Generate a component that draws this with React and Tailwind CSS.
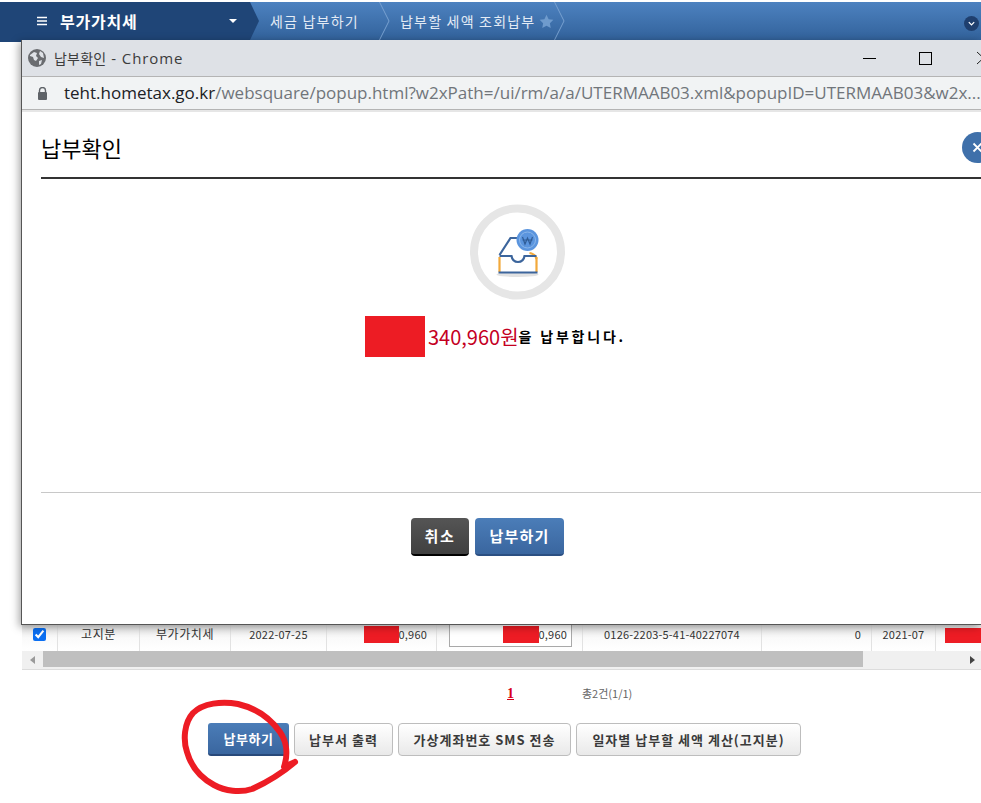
import React from 'react';

const KR = 'font-["Noto_Sans_CJK_KR","Noto_Sans",sans-serif]';

function Chevron() {
  return (
    <svg width="11" height="38" viewBox="0 0 11 38" className="shrink-0">
      <path d="M0.5 0 L10 19 L0.5 38" fill="none" stroke="#78a1d0" strokeWidth="1" />
    </svg>
  );
}

function TopNav() {
  return (
    <div className="mt-[2px] h-[38px] flex whitespace-nowrap bg-gradient-to-b from-[#4d82c0] to-[#32629b] text-[#e3ebf5] text-[14px] tracking-[1.2px]">
      <div className="w-[22px] h-[40px] bg-[#1f4577]" />
      <div className="w-[237px] h-full bg-[#1f4577] [clip-path:polygon(0_0,228px_0,237px_19px,228px_38px,0_38px)] flex items-center">
        <svg width="10" height="10" viewBox="0 0 10 10" className="ml-[15px]">
          <path d="M0 1.5H10M0 5H10M0 8.5H10" stroke="#fff" strokeWidth="1.6" />
        </svg>
        <span className="ml-[13px] font-bold text-[16px] text-white tracking-[0.8px]">부가가치세</span>
        <span className="ml-[91px] w-0 h-0 border-x-[4px] border-x-transparent border-t-[4px] border-t-white" />
      </div>
      <div className="w-[131px] flex items-center justify-between pl-[11px]">
        <span>세금 납부하기</span>
        <Chevron />
      </div>
      <div className="w-[175px] flex items-center pl-[10px]">
        <span>납부할 세액 조회납부</span>
        <svg width="15" height="15" viewBox="0 0 24 24" className="ml-[4px] shrink-0">
          <path d="M12 1l3.4 7.2 7.6 1-5.6 5.4 1.4 7.8L12 18.6l-6.8 3.8 1.4-7.8L1 9.2l7.6-1z" fill="#6f9bcd" />
        </svg>
        <span className="ml-auto"><Chevron /></span>
      </div>
      <div className="ml-auto mr-[2px] mt-[14px] w-[15px] h-[15px] rounded-full bg-[#1f3f6e] flex items-center justify-center">
        <svg width="9" height="9" viewBox="0 0 10 10">
          <path d="M2 3.5L5 6.5L8 3.5" fill="none" stroke="#fff" strokeWidth="1.4" />
        </svg>
      </div>
    </div>
  );
}

function Redacted({ w }) {
  return <span className="h-[17px] bg-[#ed1c24] shrink-0" style={{ width: w }} />;
}

function TableRow() {
  const cell = 'h-full flex items-center border-r border-[#e2e2e2] shrink-0 pb-[8px]';
  const hangul = 'text-[12px] tracking-[0.6px]';
  return (
    <div className="mt-[585px] ml-[22px] h-[26px] flex text-[11px] tracking-[0.2px] text-[#333] bg-gradient-to-b from-[#e4e4e4] via-[#fafafa] to-white">
      <div className={`${cell} w-[36px] justify-center pr-[1px]`}>
        <input type="checkbox" checked readOnly className="w-[13px] h-[13px] accent-[#0b6ff2]" />
      </div>
      <div className={`${cell} w-[82px] justify-center ${hangul}`}>고지분</div>
      <div className={`${cell} w-[91px] justify-center ${hangul}`}>부가가치세</div>
      <div className={`${cell} w-[96px] justify-center`}>2022-07-25</div>
      <div className={`${cell} w-[110px] justify-end pr-[9px]`}>
        <Redacted w={35} />
        <span>0,960</span>
      </div>
      <div className="h-full flex items-start border-r border-[#e2e2e2] shrink-0 w-[146px] pl-[12px]">
        <div className="w-[123px] h-[22px] pb-[3px] bg-white border border-t-0 border-[#a9a9a9] flex items-center justify-end pr-[4px]">
          <Redacted w={36} />
          <span>0,960</span>
        </div>
      </div>
      <div className={`${cell} w-[179px] justify-center`}>0126-2203-5-41-40227074</div>
      <div className={`${cell} w-[110px] justify-end pr-[10px]`}>0</div>
      <div className={`${cell} w-[64px] justify-center`}>2021-07</div>
      <div className="h-full flex items-center pl-[9px] pb-[6px] flex-1">
        <span className="h-[15px] w-full bg-[#ed1c24]" />
      </div>
    </div>
  );
}

function Scrollbar() {
  return (
    <div className="ml-[22px] h-[19px] bg-[#f0f0f0] border-b border-[#dcdcdc] flex items-start">
      <div className="w-[21px] h-[17px] flex items-center justify-center">
        <span className="w-0 h-0 border-y-[4.5px] border-y-transparent border-r-[5px] border-r-[#9a9a9a]" />
      </div>
      <div className="w-[820px] h-[16px] bg-[#bfbfbf]" />
      <div className="flex-1 h-[17px] flex items-center justify-end pr-[6px]">
        <span className="w-0 h-0 border-y-[4.5px] border-y-transparent border-l-[5px] border-l-[#444]" />
      </div>
    </div>
  );
}

function Pager() {
  return (
    <div className="mt-[16px] h-[14px] flex items-center">
      <span className='ml-[507px] font-["Liberation_Serif",serif] font-bold text-[14px] text-[#d8001a] underline'>1</span>
      <span className="ml-[68px] text-[11px] text-[#666]">총2건(1/1)</span>
    </div>
  );
}

function GrayBtn({ w, children }) {
  return (
    <button className="h-[33px] rounded-[4px] border border-[#bdbdbd] bg-gradient-to-b from-white to-[#e9e9e9] text-[13px] font-bold text-[#3a3a3a] tracking-[1px]" style={{ width: w }}>
      {children}
    </button>
  );
}

function BottomButtons() {
  return (
    <div className="mt-[23px] ml-[208px] flex gap-[5px]">
      <button className="w-[81px] h-[33px] rounded-[3px] bg-gradient-to-b from-[#4b7db8] to-[#3a669f] border-b-2 border-[#28497a] text-[13px] font-bold text-white tracking-[0.6px]">납부하기</button>
      <GrayBtn w={99}>납부서 출력</GrayBtn>
      <GrayBtn w={173}>가상계좌번호 SMS 전송</GrayBtn>
      <GrayBtn w={225}>일자별 납부할 세액 계산(고지분)</GrayBtn>
    </div>
  );
}

function ChromeBars() {
  return (
    <>
      <div className="h-[37px] bg-[#dee1e6] border-b border-[#b4b4b4] flex items-center">
        <svg width="18" height="18" viewBox="0 0 18 18" className="ml-[6px]">
          <circle cx="9" cy="9" r="9" fill="#6a6c70" />
          <path d="M2 6l4-3 3 1-1 3 2 2-2 3-2-1-1-3-3-1zM12 2l3 2 1 5-3-1-2-3zM11 12l3-1-1 4-2 1z" fill="#dee1e6" />
        </svg>
        <span className="ml-[8px] text-[14px] text-[#3c3c3c] tracking-[0.2px]">납부확인</span>
        <span className='ml-[5px] text-[15px] text-[#3c3c3c] tracking-[0.9px] font-["Open_Sans",sans-serif]'>- Chrome</span>
        <span className="ml-auto mr-[45px] flex items-center">
          <span className="w-[13px] h-px bg-black" />
          <span className="ml-[43px] w-[13px] h-[13px] border border-black" />
        </span>
        <svg width="4" height="14" viewBox="0 0 4 14" className="shrink-0">
          <path d="M0 1L13 13M13 1L0 13" stroke="#222" strokeWidth="1" fill="none" />
        </svg>
      </div>
      <div className="h-[33px] bg-[#f1f3f4] border-b border-[#b4b4b4] flex items-center whitespace-nowrap overflow-hidden">
        <svg width="11" height="13" viewBox="0 0 11 13" className="ml-[15px] shrink-0">
          <path d="M2.5 5V3.5a3 3 0 0 1 6 0V5" fill="none" stroke="#5f6368" strokeWidth="1.4" />
          <rect x="1" y="5" width="9" height="8" rx="1" fill="#5f6368" />
        </svg>
        <span className='ml-[16px] text-[17px] font-["Open_Sans",sans-serif] text-[#70757a]'>
          <span className="text-[#202124]">teht.hometax.go.kr</span>/websquare/popup.html?w2xPath=/ui/rm/a/a/UTERMAAB03.xml&amp;popupID=UTERMAAB03&amp;w2x...
        </span>
      </div>
      <div className="h-[2px] bg-[#e6e6e6]" />
    </>
  );
}

function InboxIcon() {
  return (
    <svg width="95" height="96" viewBox="0.500 0 95 96" className="block">
      <circle cx="48" cy="48" r="43.500" fill="none" stroke="#e6e6e6" strokeWidth="8" />
      <ellipse cx="48" cy="70.500" rx="21" ry="2.500" fill="#e2e2e2" />
      <path d="M30 53V68M67 53V68" stroke="#f2a93b" strokeWidth="2.200" fill="none" />
      <path d="M60 49Q66 50 67 55" stroke="#f2a93b" strokeWidth="2.200" fill="none" />
      <path d="M30 51L41 34H50" stroke="#3c659c" strokeWidth="2.200" fill="none" />
      <path d="M29 68.500H68M30 52H42Q43 58 48.500 58Q54 58 55 52H67" stroke="#3c659c" strokeWidth="2.200" fill="none" />
      <circle cx="58" cy="36" r="11" fill="#5b95de" />
      <circle cx="58" cy="36" r="8" fill="none" stroke="#8ab6ea" strokeWidth="1" />
      <path d="M53 33L55.500 40L58 34L60.500 40L63 33M53 36H63" stroke="#2f5c96" strokeWidth="1.200" fill="none" />
    </svg>
  );
}

function Popup() {
  return (
    <div className={`absolute left-[21px] top-[40px] w-[960px] h-[585px] bg-white border-l border-b border-[#555] shadow-[-2px_2px_8px_rgba(0,0,0,0.35)] ${KR}`}>
      <ChromeBars />
      <div className="pl-[19px]">
        <div className="h-[67px] pt-[5px] border-b-2 border-[#333] flex items-center overflow-hidden">
          <span className="text-[22px] text-black whitespace-nowrap">납부확인</span>
          <span className="ml-[840px] w-[31px] h-[31px] rounded-full bg-[#3f70aa] flex items-center justify-center shrink-0">
            <svg width="11" height="11" viewBox="0 0 11 11">
              <path d="M1.500 1.500L9.500 9.500M9.500 1.500L1.500 9.500" stroke="#fff" strokeWidth="1.800" />
            </svg>
          </span>
        </div>
        <div className="ml-[429px] mt-[25px] w-[95px]"><InboxIcon /></div>
        <div className="mt-[16px] ml-[324px] h-[41px] flex items-center">
          <span className="w-[60px] h-[41px] bg-[#ed1c24]" />
          <span className="ml-[3px] text-[20px] text-[#c4001f]">340,960원</span>
          <span className="text-[14px] font-bold text-black tracking-[2.8px]">을 납부합니다.</span>
        </div>
        <div className="mt-[135px] h-px bg-[#c8c8c8]" />
        <div className="mt-[25px] ml-[370px] flex gap-[6px]">
          <button className="w-[58px] h-[38px] rounded-[4px] bg-gradient-to-b from-[#555] to-[#404040] border-b-2 border-black text-[15px] font-bold text-white tracking-[1.6px]">취소</button>
          <button className="w-[89px] h-[38px] rounded-[4px] bg-gradient-to-b from-[#4b7db8] to-[#3a669f] border-b-2 border-[#2b4f82] text-[15px] font-bold text-white tracking-[1.2px]">납부하기</button>
        </div>
      </div>
    </div>
  );
}

export default function App() {
  return (
    <div className={`relative w-[981px] h-[803px] overflow-hidden bg-white ${KR}`}>
      <TopNav />
      <TableRow />
      <Scrollbar />
      <Pager />
      <BottomButtons />
      <Popup />
      {/* hand drawn marker loop over the pay button */}
      <svg width="981" height="803" className="absolute left-0 top-0 pointer-events-none">
        <path
          d="M295 762L284 767C288 755 287 742 280 732C270 718 255 708 238 704C222 701 203 703 193 713C184 723 183 740 187 752C191 766 201 778 214 785C225 791 240 793 252 789C268 782 282 773 295 762"
          fill="none"
          stroke="#ed1c24"
          strokeWidth="6"
          strokeLinejoin="round"
          strokeLinecap="round"
        />
      </svg>
    </div>
  );
}
